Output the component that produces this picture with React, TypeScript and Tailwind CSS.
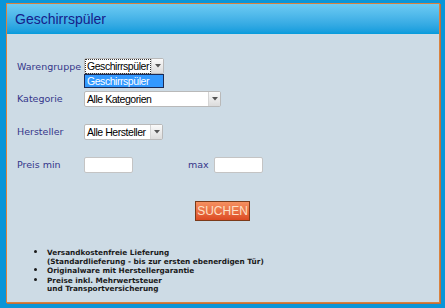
import React from "react";

const labelCls = "w-[67px] shrink-0 text-[9.5px] text-[#35368a] [font-family:'DejaVu_Sans',sans-serif]";

const Arrow: React.FC = () => (
  <div className="flex h-full w-[12px] shrink-0 items-center justify-center border-l border-[#d4d4d4] bg-gradient-to-b from-[#fafafa] to-[#dcdcdc]">
    <svg width="6" height="4" viewBox="0 0 6 4">
      <path d="M0 0 L6 0 L3 3.5 Z" fill="#555" />
    </svg>
  </div>
);

interface FakeSelectProps {
  value: string;
  width: string;
  focused?: boolean;
}
const FakeSelect: React.FC<FakeSelectProps> = ({ value, width, focused }) => {
  return (
    <div className={`flex h-[16px] items-center rounded-[2px] border border-[#b9b9b9] bg-white ${width}`}>
      <div className="flex h-full min-w-0 flex-1 items-center pl-[1px]">
        <span
          className={`whitespace-nowrap px-[1px] text-[10.5px] leading-[13px] tracking-[-0.45px] text-black [font-family:'Liberation_Sans',Arial,sans-serif] ${
            focused ? "outline outline-1 outline-dotted outline-[#333]" : ""
          }`}
        >
          {value}
        </span>
      </div>
      <Arrow />
    </div>
  );
};

const App: React.FC = () => {
  return (
    <div className="h-[308px] w-[445px] bg-[#0a95d8] pl-[6px] pt-[3px]">
      <div className="flex h-[300px] w-[434px] flex-col border border-[#d9823f] shadow-[1px_1px_0_#c0703a]">
        {/* Header */}
        <div className="flex h-[30px] items-center bg-gradient-to-b from-[#6ccbf3] to-[#039bdc] pl-[8px]">
          <span className="text-[14px] text-[#15208a] [font-family:'Liberation_Sans',Arial,sans-serif]">
            Geschirrspüler
          </span>
        </div>

        {/* Body */}
        <div className="flex flex-1 flex-col bg-[#cddbe5] pl-[10px] pt-[24px]">
          {/* Warengruppe */}
          <div className="flex items-start">
            <div className={`${labelCls} pt-[2px]`}>Warengruppe</div>
            <div className="flex flex-col">
              <FakeSelect value="Geschirrspüler" width="w-[80px]" focused />
              <div className="h-[14px] w-[80px] whitespace-nowrap border border-[#1b2a55] bg-[#3399ff] pl-[2px] text-[10.5px] leading-[12px] tracking-[-0.45px] text-white [font-family:'Liberation_Sans',Arial,sans-serif]">
                Geschirrspüler
              </div>
            </div>
          </div>

          {/* Kategorie */}
          <div className="mt-[3px] flex items-center">
            <div className={labelCls}>Kategorie</div>
            <FakeSelect value="Alle Kategorien" width="w-[137px]" />
          </div>

          {/* Hersteller */}
          <div className="mt-[17px] flex items-center">
            <div className={labelCls}>Hersteller</div>
            <FakeSelect value="Alle Hersteller" width="w-[79px]" />
          </div>

          {/* Preis */}
          <div className="mt-[17px] flex items-center">
            <div className={labelCls}>Preis min</div>
            <div className="h-[16px] w-[49px] rounded-[2px] border border-[#c4c4c4] bg-white" />
            <div className="ml-[55px] w-[26px] text-[9.5px] text-[#35368a] [font-family:'DejaVu_Sans',sans-serif]">max</div>
            <div className="h-[16px] w-[49px] rounded-[2px] border border-[#c4c4c4] bg-white" />
          </div>

          {/* Button */}
          <div className="mt-[28px] flex pl-[178px]">
            <button className="h-[20px] w-[55px] border border-[#7a3a1a] bg-gradient-to-b from-[#f59060] to-[#dc4a22] text-[12px] leading-[18px] text-[#fde0c8] [font-family:'Liberation_Sans',Arial,sans-serif]">
              SUCHEN
            </button>
          </div>

          {/* Hinweise */}
          <ul className="mt-[27px] list-disc pl-[30px] text-[7.3px] font-bold leading-[8.5px] text-[#1a1a1a] [font-family:'DejaVu_Sans',sans-serif] marker:text-[10px]">
            <li>
              Versandkostenfreie Lieferung
              <br />
              (Standardlieferung - bis zur ersten ebenerdigen Tür)
            </li>
            <li>Originalware mit Herstellergarantie</li>
            <li>
              Preise inkl. Mehrwertsteuer
              <br />
              und Transportversicherung
            </li>
          </ul>
        </div>
      </div>
    </div>
  );
};

export default App;
